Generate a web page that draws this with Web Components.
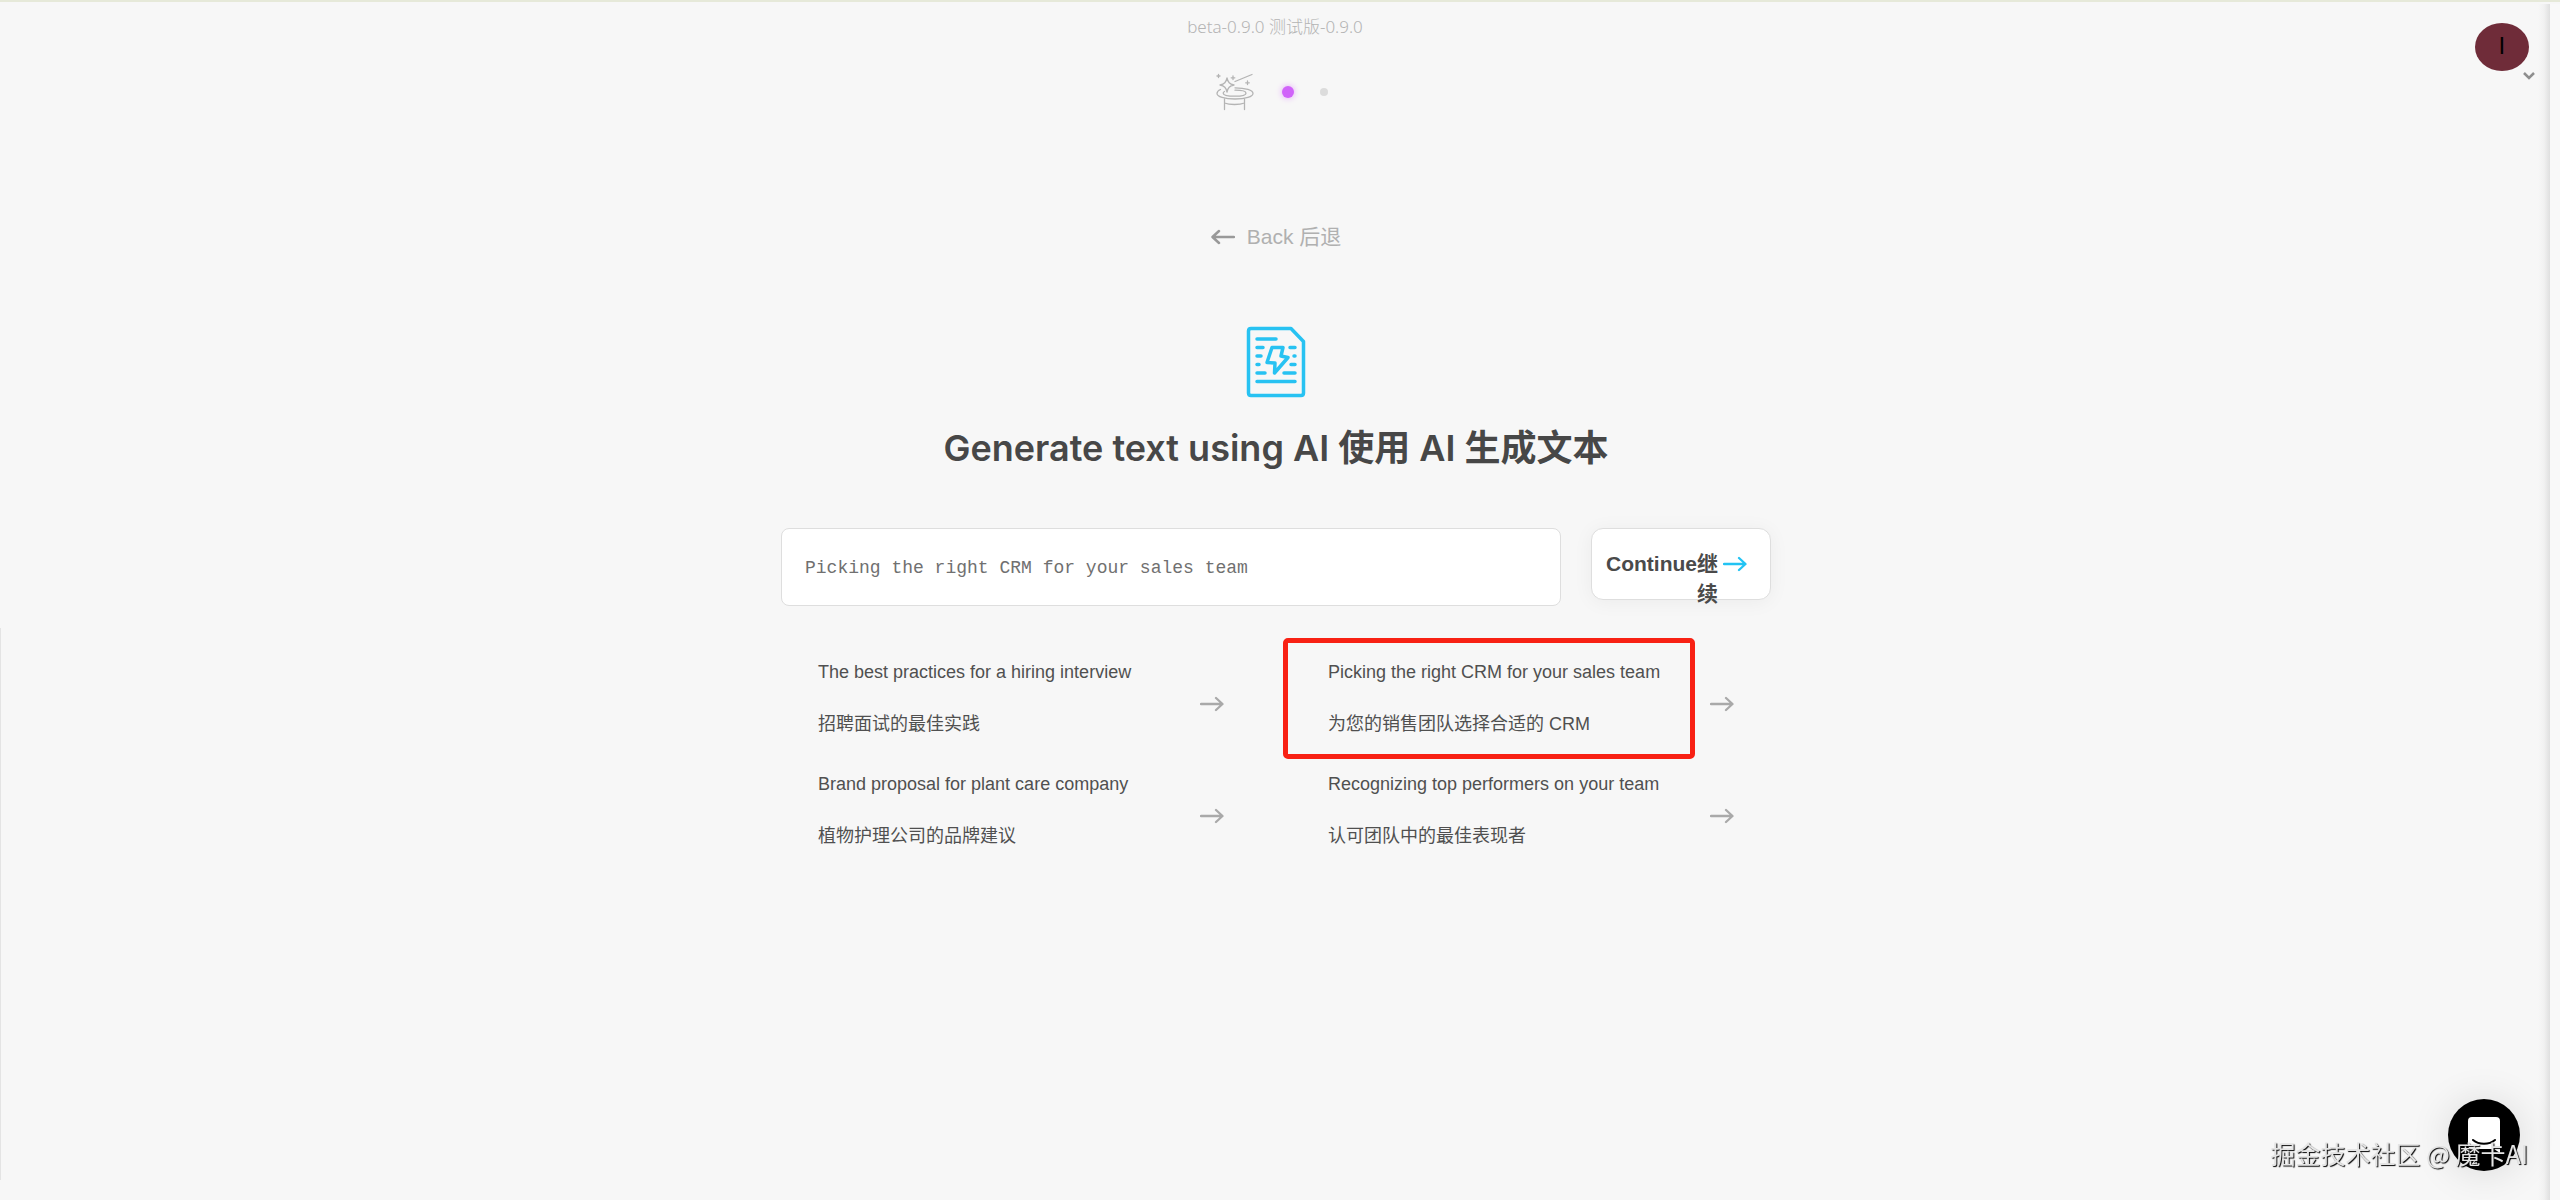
<!DOCTYPE html>
<html lang="en">
<head>
<meta charset="utf-8">
<meta name="viewport" content="width=device-width, initial-scale=1">
<title>Generate text using AI</title>
<style>
html { height: 100%; }
body { margin: 0; min-height: 100%; display: flex; background: #f7f7f7; color: #4a4a4a; font-family: "Liberation Sans", "Noto Sans CJK SC", sans-serif; }
</style>
</head>
<body>
<ai-page>
    <ai-steps slot="header">beta-0.9.0 测试版-0.9.0</ai-steps>
    <ai-account slot="account" initial="I"></ai-account>
    <ai-back>Back 后退</ai-back>
    <ai-title>Generate text using AI 使用 AI 生成文本</ai-title>
    <ai-prompt value="Picking the right CRM for your sales team">Continue继续</ai-prompt>
    <ai-suggestions>
        <ai-suggestion text="The best practices for a hiring interview">招聘面试的最佳实践</ai-suggestion>
        <ai-suggestion text="Picking the right CRM for your sales team" marked>为您的销售团队选择合适的 CRM</ai-suggestion>
        <ai-suggestion text="Brand proposal for plant care company">植物护理公司的品牌建议</ai-suggestion>
        <ai-suggestion text="Recognizing top performers on your team">认可团队中的最佳表现者</ai-suggestion>
    </ai-suggestions>
</ai-page>
<ai-launcher></ai-launcher>
<ai-watermark>掘金技术社区 @ 魔卡AI</ai-watermark>

<script>
function define(name, render) {
    customElements.define(name, class extends HTMLElement {
        constructor() {
            super();
            this.attachShadow({ mode: 'open' });
        }
        connectedCallback() {
            this.shadowRoot.innerHTML = render(this);
        }
    });
}

function arrow(cls) {
    return '<svg class="' + cls + '" width="24" height="16" viewBox="0 0 24 16" fill="none" stroke="currentColor" stroke-width="2.300" stroke-linecap="round" stroke-linejoin="round" aria-hidden="true">' +
        '<path d="M1 8H22M16 2l6.500 6-6.500 6"/></svg>';
}

define('ai-page', () => `
    <style>
    :host { flex: 1; display: flex; position: relative; min-width: 0; border-top: 2px solid #e6e9d9; box-sizing: border-box; }
    .view { flex: 1; min-width: 0; position: relative; display: flex; flex-direction: column; }
    main { display: flex; flex-direction: column; align-items: center; padding: 0 24px 0 26px; }
    .edge { flex: none; width: 10px; margin-top: 2px; background: #f9f9f9; position: relative; }
    .edge::before { content: ""; position: absolute; top: 0; bottom: 0; right: 100%; width: 12px; background: linear-gradient(to right, #f7f7f7, #f1f1f1 50%, #dfdfdf); }
    .view::before { content: ""; position: absolute; left: 0; top: 626px; bottom: 20px; width: 1px; background: #e4e4e4; }
    </style>
    <div class="view">
        <slot name="header"></slot>
        <slot name="account"></slot>
        <main><slot></slot></main>
    </div>
    <div class="edge"></div>`);

define('ai-steps', () => `
    <style>
    :host { display: flex; flex-direction: column; align-items: center; gap: 34px; padding-top: 13px; color: #b4b4b4; }
    .version { font: 300 17px/24px "Noto Sans", "Noto Sans CJK SC", sans-serif; }
    ol { display: flex; align-items: center; list-style: none; margin: 0; padding: 0; }
    li { display: flex; align-items: center; justify-content: center; width: 36px; height: 38px; }
    li:first-child { width: 54px; justify-content: flex-start; margin-left: 8px; }
    .dot { width: 8px; height: 8px; border-radius: 50%; background: #dcdcdc; }
    .dot.active { width: 12px; height: 12px; background: #d063f9; box-shadow: 0 0 6px #e3a2fb; }
    </style>
    <div class="version"><slot></slot></div>
    <ol>
        <li>
            <svg width="38" height="38" viewBox="0 0 38 38" fill="none" stroke="#b4b4b4" stroke-width="1.300" stroke-linecap="round" stroke-linejoin="round" aria-hidden="true">
                <path d="M11 5c1 4.500 2.500 6 7 7-4.500 1-6 2.500-7 7-1-4.500-2.500-6-7-7 4.500-1 6-2.500 7-7z"/>
                <path d="M19 8.500L36 1.500M2.500 1.500v3M1 3h3M17 3v3.500M15.200 4.800h3.600M31.500 8v3.500M29.700 9.800h3.600"/>
                <path d="M4.500 16.500C2 17.500 1 19 1 20.500c0 3.200 7.500 5.500 18 5.500s18-2.300 18-5.500-7.500-5.700-18-5.700"/>
                <path d="M8.500 18.500c-1 .5-1.300 1-1.300 1.700 0 2 4.800 3 11.800 3s11-1.200 11-3-4-3-11-3"/>
                <path d="M8.500 26v10.500M28.500 26v10.500M8.500 30c5 2 15 2 20 0"/>
            </svg>
        </li>
        <li><span class="dot active"></span></li>
        <li><span class="dot"></span></li>
    </ol>`);

define('ai-account', el => `
    <style>
    :host { position: absolute; top: 21px; right: 15px; display: block; }
    button { display: flex; flex-direction: column; align-items: center; width: 66px; padding: 0; border: 0; background: none; cursor: pointer; }
    .avatar { display: flex; align-items: center; justify-content: center; width: 54px; height: 48px; border-radius: 50%; background: #6f2c39; color: #000; font: 23px/24px Roboto, sans-serif; }
    svg { align-self: flex-end; }
    </style>
    <button type="button" aria-label="Account">
        <span class="avatar">${el.getAttribute('initial')}</span>
        <svg width="12" height="10" viewBox="0 0 12 10" fill="none" stroke="#8e8e8e" stroke-width="2.500" aria-hidden="true"><path d="M1 2l5 5 5-5"/></svg>
    </button>`);

define('ai-back', () => `
    <style>
    :host { display: block; margin-top: 110px; }
    a { display: flex; align-items: center; gap: 12px; color: #b0b0b0; font-size: 21px; line-height: 32px; text-decoration: none; }
    svg { color: #999; }
    </style>
    <a href="#back">
        <svg width="24" height="16" viewBox="0 0 24 16" fill="none" stroke="currentColor" stroke-width="2.500" stroke-linecap="round" stroke-linejoin="round" aria-hidden="true"><path d="M23 8H2M8 2L1.500 8 8 14"/></svg>
        <span><slot></slot></span>
    </a>`);

define('ai-title', () => `
    <style>
    :host { display: flex; flex-direction: column; align-items: center; gap: 26px; margin-top: 73px; text-align: center; }
    h1 { margin: 0; font: 600 36px/48px Inter, "Noto Sans CJK SC", sans-serif; color: #474747; }
    </style>
    <svg width="60" height="72" viewBox="0 0 60 72" fill="none" stroke="#27c2f2" stroke-width="3.500" stroke-linecap="round" stroke-linejoin="round" aria-hidden="true">
        <path d="M5 2.500H45L57.500 15.500V67Q57.500 69.500 55 69.500H5Q2.500 69.500 2.500 67V5Q2.500 2.500 5 2.500z"/>
        <path d="M11 13h19M11 21.500h6M11 30h4M11 38.500h2M11 47h8M11 55.500h38M44 21.500h5M48 30h1M45 38.500h4M38 47h11"/>
        <path d="M26 21.500h11L35 30l7 1.500L28.500 47l.5-10-8-.5z" stroke-width="3.500"/>
    </svg>
    <h1><slot></slot></h1>`);

define('ai-prompt', el => `
    <style>
    :host { display: block; width: 100%; max-width: 990px; margin-top: 56px; }
    form { display: flex; align-items: flex-start; gap: 30px; }
    input { flex: 1; min-width: 0; height: 78px; box-sizing: border-box; padding: 2px 23px 0; border: 1px solid #dedede; border-radius: 8px; background: #fff; color: #707070; font: 18px "Liberation Mono", monospace; outline: none; }
    button { flex: none; display: flex; align-items: flex-start; justify-content: flex-end; width: 180px; height: 72px; box-sizing: border-box; padding: 20px 23px 0 12px; border: 1px solid #dedede; border-radius: 12px; background: #fff; box-shadow: 0 2px 20px rgba(0, 0, 0, .05); color: #4a4a4a; font: bold 21px/30px "Liberation Sans", "Noto Sans CJK SC", sans-serif; text-align: right; cursor: pointer; }
    .next { flex: none; color: #22c3f3; margin: 7px 0 0 5px; }
    </style>
    <form onsubmit="return false">
        <input type="text" aria-label="Prompt" value="${el.getAttribute('value')}">
        <button type="submit"><span><slot></slot></span>${arrow('next')}</button>
    </form>`);

define('ai-suggestions', () => `
    <style>
    :host { display: grid; grid-template-columns: 1fr 1fr; column-gap: 30px; width: 100%; max-width: 990px; margin-top: 42px; }
    </style>
    <slot></slot>`);

define('ai-suggestion', el => `
    <style>
    :host { display: block; position: relative; }
    button { display: flex; align-items: center; justify-content: space-between; width: 100%; height: 112px; padding: 0 37px; border: 0; background: none; color: #505050; font: 18px/24px "Liberation Sans", "Noto Sans CJK SC", sans-serif; text-align: left; cursor: pointer; }
    .lines { align-self: flex-start; display: flex; flex-direction: column; gap: 28px; padding-top: 12px; }
    .go { flex: none; color: #a9a9a9; }
    :host([marked])::after { content: ""; position: absolute; top: -10px; left: -8px; width: 412px; height: 121px; box-sizing: border-box; border: 5px solid #f82114; border-radius: 5px; pointer-events: none; }
    </style>
    <button type="button">
        <span class="lines"><span>${el.getAttribute('text')}</span><span><slot></slot></span></span>
        ${arrow('go')}
    </button>`);

define('ai-launcher', () => `
    <style>
    :host { position: fixed; right: 40px; bottom: 29px; display: block; }
    button { display: flex; align-items: center; justify-content: center; width: 72px; height: 72px; padding: 0; border: 0; border-radius: 50%; background: #000; box-shadow: 0 2px 40px rgba(0, 0, 0, .12); cursor: pointer; }
    </style>
    <button type="button" aria-label="Open chat">
        <svg width="32" height="36" viewBox="0 0 32 36" aria-hidden="true">
            <path d="M4 0h24q4 0 4 4v32l-6-4H4q-4 0-4-4V4q0-4 4-4z" fill="#fff"/>
            <path d="M5 23c6 5 16 5 22 0" fill="none" stroke="#000" stroke-width="2" stroke-linecap="round"/>
        </svg>
    </button>`);

define('ai-watermark', () => `
    <style>
    :host { position: fixed; right: 32px; bottom: 29px; display: block; color: #e4e4e4; font: 25px/36px "Noto Sans CJK SC", sans-serif; text-shadow: 1px 1px 1px #000; white-space: nowrap; pointer-events: none; }
    </style>
    <slot></slot>`);
</script>
</body>
</html>
